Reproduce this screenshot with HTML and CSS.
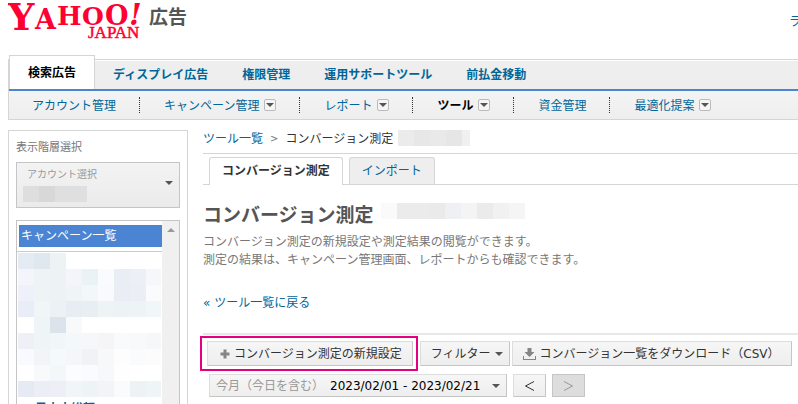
FILE: index.html
```html
<!DOCTYPE html>
<html lang="ja">
<head>
    <meta charset="UTF-8">
    <meta name="viewport" content="width=device-width, initial-scale=1.0">
    <title>コンバージョン測定</title>
    <link rel="stylesheet" href="styles.css">
</head>
<body>
    <header class="header">
        <a href="#" class="logo">
            <svg width="137" height="40" viewBox="0 0 137 40" role="img" aria-label="Yahoo! Japan">
                <g class="logo-yahoo">
                    <text x="0" y="30" font-size="37">Y</text>
                    <text x="27" y="29" font-size="27">A</text>
                    <text x="49" y="25" font-size="26">H</text>
                    <text x="74" y="25" font-size="25">O</text>
                    <text x="97" y="25" font-size="27">O</text>
                    <text x="121" y="25" font-size="29" font-style="italic">!</text>
                </g>
                <text class="logo-japan" x="80" y="38" font-size="17">JAPAN</text>
            </svg>
            <span class="logo-ad">広告</span>
        </a>
        <a href="#" class="header-link">ライブラリー</a>
    </header>

    <nav class="nav">
        <ul class="nav-tabs">
            <li class="active"><a href="#">検索広告</a></li>
            <li><a href="#">ディスプレイ広告</a></li>
            <li><a href="#">権限管理</a></li>
            <li><a href="#">運用サポートツール</a></li>
            <li><a href="#">前払金移動</a></li>
        </ul>
        <ul class="nav-sub">
            <li><a href="#">アカウント管理</a></li>
            <li><a href="#">キャンペーン管理</a><span class="drop"></span></li>
            <li><a href="#">レポート</a><span class="drop"></span></li>
            <li class="current"><a href="#">ツール</a><span class="drop"></span></li>
            <li><a href="#">資金管理</a></li>
            <li><a href="#">最適化提案</a><span class="drop"></span></li>
        </ul>
    </nav>

    <div class="wrap">
        <aside class="sidebar">
            <div class="sidebar-title">表示階層選択</div>
            <button type="button" class="account">
                <span class="account-label">アカウント選択</span>
                <span class="mask" data-colors="dedede d8d8d8 dfdfdf dfdfdf"></span>
                <span class="arrow"></span>
            </button>
            <div class="tree">
                <div class="tree-body">
                    <a href="#" class="tree-head">キャンペーン一覧</a>
                    <div class="tree-list">
                        <div class="mask mask-tree" data-colors="
                            e5ebf3 e0e8ef edf2f4 ffffff ffffff ffffff ffffff ffffff ffffff
                            f3f5fa eef3f6 edf3f5 f4f5fa ebf2f5 fafbfd e8eef3 ecf0f6 f6f7fa
                            eef1fa eef3f5 edf2f4 eff4f7 f2f7fa f9fafc eaedf3 ebeff5 fafbfd
                            e9edf7 f0f5f7 ebf1f5 e7edf2 e8eef2 eef3f5 edf3f5 eef3f5 f1f6f9
                            ffffff eff4f7 dbe4eb f8f9fb ffffff ffffff ffffff ffffff ffffff
                            edf1f6 eff4f7 f1f6f9 f3f8fb f6f7f9 f5f5f7 f9fafb f8f9fa f6f7f8
                            f8faff f2f4f8 f4f9fb f5f6f8 eff3f5 f7f8fa fdfdfd fafbfc fcfcfd
                            ffffff f8f9fb f3f7fa fbfcfd fafbfc f7f8fa fdfefd ffffff ffffff
                            e5eaf4 ebeff5 ecf0f6 f0f5f7 eef3f5 f2f4f8 fafbfd edf3f5 eff4f7"></div>
                        <a href="#" class="tree-item">日本小総額</a>
                    </div>
                </div>
                <div class="tree-scroll"><span class="arrow arrow-up"></span></div>
            </div>
        </aside>

        <main class="main">
            <div class="breadcrumb">
                <a href="#">ツール一覧</a>
                <span class="sep">&gt;</span>
                <span>コンバージョン測定</span>
                <span class="mask" data-colors="ebebeb e7e7e7 e9e9e9 e6e6e6 eff0f2"></span>
            </div>
            <ul class="tabs">
                <li class="active"><a href="#">コンバージョン測定</a></li>
                <li><a href="#">インポート</a></li>
            </ul>
            <div class="title">
                <h1>コンバージョン測定</h1>
                <span class="mask" data-colors="fafafa ebebeb ebebeb eaeaea eff0f3 f4f4f4 ebebeb f1f1f1 f5f5f5"></span>
            </div>
            <p class="desc">コンバージョン測定の新規設定や測定結果の閲覧ができます。<br>測定の結果は、キャンペーン管理画面、レポートからも確認できます。</p>
            <p class="back"><a href="#">« ツール一覧に戻る</a></p>

            <div class="toolbar">
                <div class="toolbar-row">
                    <div class="highlight">
                        <button type="button" class="btn btn-new">
                            <svg width="10" height="10" viewBox="0 0 10 10"><path d="M3.5 0.5h3v3h3v3h-3v3h-3v-3h-3v-3h3z" fill="#858585"/></svg>
                            コンバージョン測定の新規設定
                        </button>
                    </div>
                    <button type="button" class="btn btn-filter">フィルター<span class="arrow"></span></button>
                    <button type="button" class="btn btn-csv">
                        <svg width="13" height="12" viewBox="0 0 13 12"><path d="M4.5 0h4v4h3l-5 5-5-5h3zM0 8h1v3h11v-3h1v4h-13z" fill="#858585"/></svg>
                        コンバージョン一覧をダウンロード（CSV）
                    </button>
                </div>
                <div class="toolbar-row toolbar-date">
                    <button type="button" class="btn btn-date"><span class="term">今月（今日を含む）</span>2023/02/01 - 2023/02/21<span class="arrow"></span></button>
                    <button type="button" class="btn btn-page" aria-label="前へ"><svg width="11" height="10" viewBox="0 0 11 10"><path d="M10 0.5L1.5 5L10 9.5" fill="none" stroke="#333"/></svg></button>
                    <button type="button" class="btn btn-page" aria-label="次へ" disabled><svg width="11" height="10" viewBox="0 0 11 10"><path d="M1 0.5L9.5 5L1 9.5" fill="none" stroke="#999"/></svg></button>
                </div>
            </div>
        </main>
    </div>

    <script src="script.js"></script>
</body>
</html>
```
FILE: styles.css
```css
* {
    box-sizing: border-box;
}
body {
    margin: 0 0 0 8px;
    height: 100vh;
    overflow: hidden;
    background: #fff;
    color: #333;
    font-family: "DejaVu Sans", "Noto Sans CJK JP", sans-serif;
    font-size: 12px;
    line-height: 18px;
}
ul, p, h1 {
    margin: 0;
    padding: 0;
}
ul {
    list-style: none;
}
a {
    color: #069;
    text-decoration: none;
}
button {
    font: inherit;
    color: inherit;
    cursor: pointer;
}
svg {
    display: block;
    flex: none;
}

/* header */
.header {
    display: flex;
    justify-content: space-between;
    height: 59px;
}
.logo {
    display: flex;
    gap: 4px;
}
.logo-yahoo {
    fill: #ff0033;
    font-family: "DejaVu Serif", serif;
    font-weight: bold;
}
.logo-japan {
    fill: #ff0033;
    stroke: #ff0033;
    stroke-width: 0.5;
    font-family: "Liberation Serif", serif;
}
.logo-ad {
    padding-top: 8px;
    color: #555;
    font-size: 19px;
    font-weight: bold;
}
.header-link {
    width: 9px;
    padding-top: 13px;
    overflow: hidden;
    white-space: nowrap;
}

/* global navigation */
.nav {
    border: 1px solid #d5d5d5;
    border-right: 0;
    background: linear-gradient(#fafafa, #eee);
    white-space: nowrap;
}
.nav ul {
    display: flex;
}
.nav-tabs {
    height: 31px;
    border-top: 1px solid #fff;
    border-bottom: 2px solid #4a84d3;
    background: #eee;
    font-weight: bold;
}
.nav-tabs a {
    display: block;
    padding: 5px 17px;
}
.nav-tabs .active {
    height: 34px;
    margin: -6px 1px 0 0;
    border: 1px solid #d5d5d5;
    border-bottom: 0;
    background: #fff;
}
.nav-tabs .active a {
    padding: 8px 18px;
    color: #000;
}
.nav-sub {
    height: 28px;
    align-items: center;
}
.nav-sub li {
    display: flex;
    align-items: center;
    gap: 5px;
    height: 16px;
    padding: 0 23px 0 24px;
    border-right: 1px dotted #333;
}
.nav-sub li:first-child {
    padding-left: 23px;
}
.nav-sub li:last-child {
    border-right: 0;
}
.nav-sub a {
    padding-top: 2px;
}
.nav-sub .current a {
    color: #000;
    font-weight: bold;
}
.drop {
    display: flex;
    align-items: center;
    justify-content: center;
    width: 12px;
    height: 12px;
    border: 1px solid #bbb;
    border-radius: 2px;
    background: #f5f5f5;
}
.drop::before {
    content: "";
    border: 4px solid transparent;
    border-top-color: #555;
    border-bottom: 0;
}

.arrow {
    border: 4px solid transparent;
    border-top-color: #555;
    border-bottom: 0;
}
.arrow-up {
    border: 4px solid transparent;
    border-bottom-color: #999;
    border-top: 0;
}
.mask {
    display: flex;
    height: 16px;
}
.mask i {
    width: 16px;
}

/* sidebar */
.wrap {
    display: flex;
    align-items: flex-start;
    gap: 15px;
    margin-top: 10px;
}
.sidebar {
    flex: none;
    width: 180px;
    padding: 7px;
    border: 1px solid #d5d5d5;
}
.sidebar-title {
    height: 24px;
    color: #777;
    font-size: 11px;
    line-height: 20px;
}
.account {
    display: grid;
    grid-template: 23px 16px / 1fr auto;
    align-content: start;
    align-items: center;
    width: 100%;
    height: 46px;
    padding: 0 6px;
    border: 1px solid #c5c5c5;
    background: linear-gradient(#f3f3f3, #ebebeb);
    text-align: left;
}
.account-label {
    padding-left: 4px;
    color: #999;
    font-size: 10px;
}
.account .mask {
    grid-row: 2;
}
.account .arrow {
    grid-row: 1 / 3;
    grid-column: 2;
}
.tree {
    display: flex;
    height: 240px;
    margin-top: 12px;
    border: 1px solid #c5c5c5;
}
.tree-body {
    flex: 1;
    min-width: 0;
}
.tree-head {
    display: block;
    margin: 4px 0 4px 2px;
    padding: 2px;
    background: #4a84d3;
    color: #fff;
}
.tree-list {
    padding: 1px;
    border-top: 1px solid #ccc;
}
.mask-tree {
    display: grid;
    grid-template-columns: repeat(9, 16px);
    grid-auto-rows: 16px;
    height: auto;
    overflow: hidden;
}
.tree-item {
    display: block;
    padding: 3px 0 0 17px;
    font-weight: bold;
}
.tree-scroll {
    display: flex;
    justify-content: center;
    width: 17px;
    padding-top: 7px;
    background: #f0f0f0;
}
.tree-scroll .arrow {
    height: 4px;
}

/* main */
.main {
    flex: 1;
    min-width: 0;
    white-space: nowrap;
}
.breadcrumb {
    display: flex;
    gap: 7px;
    height: 23px;
}
.breadcrumb .sep {
    color: #777;
    font-size: 10px;
}
.breadcrumb .mask {
    width: 72px;
    margin-left: -2px;
    overflow: hidden;
}
.breadcrumb .mask i {
    flex: none;
}
.tabs {
    display: flex;
    align-items: flex-end;
    gap: 6px;
    height: 32px;
    padding-left: 6px;
    border-top: 1px solid #d5d5d5;
    border-bottom: 1px solid #d5d5d5;
}
.tabs li {
    height: 27px;
    padding: 4px 12px;
    border: 1px solid #d5d5d5;
    border-bottom: 0;
    border-radius: 3px 3px 0 0;
    background: #eee;
}
.tabs .active {
    height: 28px;
    margin-bottom: -1px;
    background: #fff;
    font-weight: bold;
}
.tabs .active a {
    color: #333;
}
.title {
    display: flex;
    gap: 7px;
    margin-top: 18px;
}
.title h1 {
    color: #555;
    font-size: 19px;
    line-height: 24px;
}
.desc {
    margin-top: 6px;
    color: #777;
}
.back {
    margin-top: 25px;
}
.toolbar {
    margin-top: 21px;
    padding-top: 1px;
    border-top: 2px solid #e8e8e8;
}
.toolbar-row {
    display: flex;
    align-items: center;
    gap: 2px;
}
.highlight {
    margin-left: -3px;
    padding: 3px 3px 3px 5px;
    border: 2px solid #e5007f;
}
.btn {
    display: flex;
    align-items: center;
    justify-content: center;
    gap: 4px;
    height: 25px;
    padding: 0 6px 0 10px;
    border: 1px solid #c5c5c5;
    border-top-color: #ddd;
    border-left-color: #ddd;
    background: linear-gradient(#f6f6f6, #eee);
    white-space: nowrap;
}
.btn-new {
    padding: 0 10px 0 12px;
}
.btn-csv {
    padding: 0 11px 0 10px;
}
.toolbar-date {
    gap: 6px;
    margin-top: 3px;
    padding-left: 6px;
}
.toolbar-date .btn {
    height: 23px;
}
.btn-date {
    gap: 6px;
    min-width: 298px;
    padding: 0 6px;
    color: #000;
}
.btn-date .arrow {
    margin-left: auto;
}
.term {
    color: #999;
}
.btn-page {
    width: 33px;
    padding: 0;
}
.btn-page:disabled {
    border-color: #c5c5c5;
    background: #ddd;
    cursor: default;
}
```
FILE: script.js
```js
// fill the masked areas with their blocks
var masks = document.querySelectorAll(".mask");

masks.forEach(function(mask) {
    var colors = mask.dataset.colors.trim().split(/\s+/);
    colors.forEach(function(color) {
        var block = document.createElement("i");
        block.style.backgroundColor = "#" + color;
        mask.appendChild(block);
    });
});
```
